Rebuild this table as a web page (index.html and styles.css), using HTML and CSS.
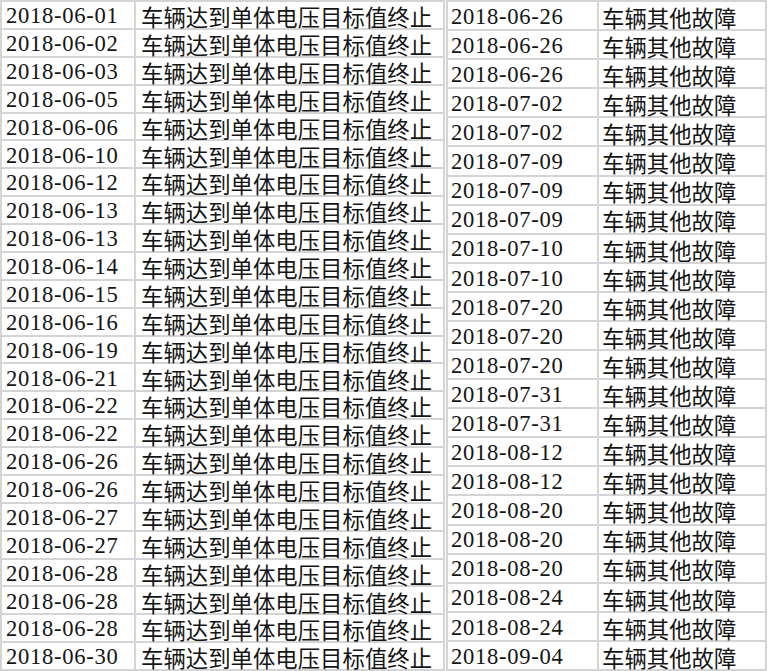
FILE: index.html
```html
<!DOCTYPE html>
<html lang="zh">
<head>
<meta charset="utf-8">
<link rel="stylesheet" href="styles.css">
</head>
<body>
<div class="sheet">
  <div class="grid grid-left">
    <div class="c d">2018-06-01</div><div class="c t">车辆达到单体电压目标值终止</div>
    <div class="c d">2018-06-02</div><div class="c t">车辆达到单体电压目标值终止</div>
    <div class="c d">2018-06-03</div><div class="c t">车辆达到单体电压目标值终止</div>
    <div class="c d">2018-06-05</div><div class="c t">车辆达到单体电压目标值终止</div>
    <div class="c d">2018-06-06</div><div class="c t">车辆达到单体电压目标值终止</div>
    <div class="c d">2018-06-10</div><div class="c t">车辆达到单体电压目标值终止</div>
    <div class="c d">2018-06-12</div><div class="c t">车辆达到单体电压目标值终止</div>
    <div class="c d">2018-06-13</div><div class="c t">车辆达到单体电压目标值终止</div>
    <div class="c d">2018-06-13</div><div class="c t">车辆达到单体电压目标值终止</div>
    <div class="c d">2018-06-14</div><div class="c t">车辆达到单体电压目标值终止</div>
    <div class="c d">2018-06-15</div><div class="c t">车辆达到单体电压目标值终止</div>
    <div class="c d">2018-06-16</div><div class="c t">车辆达到单体电压目标值终止</div>
    <div class="c d">2018-06-19</div><div class="c t">车辆达到单体电压目标值终止</div>
    <div class="c d">2018-06-21</div><div class="c t">车辆达到单体电压目标值终止</div>
    <div class="c d">2018-06-22</div><div class="c t">车辆达到单体电压目标值终止</div>
    <div class="c d">2018-06-22</div><div class="c t">车辆达到单体电压目标值终止</div>
    <div class="c d">2018-06-26</div><div class="c t">车辆达到单体电压目标值终止</div>
    <div class="c d">2018-06-26</div><div class="c t">车辆达到单体电压目标值终止</div>
    <div class="c d">2018-06-27</div><div class="c t">车辆达到单体电压目标值终止</div>
    <div class="c d">2018-06-27</div><div class="c t">车辆达到单体电压目标值终止</div>
    <div class="c d">2018-06-28</div><div class="c t">车辆达到单体电压目标值终止</div>
    <div class="c d">2018-06-28</div><div class="c t">车辆达到单体电压目标值终止</div>
    <div class="c d">2018-06-28</div><div class="c t">车辆达到单体电压目标值终止</div>
    <div class="c d">2018-06-30</div><div class="c t">车辆达到单体电压目标值终止</div>
  </div>
  <div class="grid grid-right">
    <div class="c d">2018-06-26</div><div class="c t">车辆其他故障</div>
    <div class="c d">2018-06-26</div><div class="c t">车辆其他故障</div>
    <div class="c d">2018-06-26</div><div class="c t">车辆其他故障</div>
    <div class="c d">2018-07-02</div><div class="c t">车辆其他故障</div>
    <div class="c d">2018-07-02</div><div class="c t">车辆其他故障</div>
    <div class="c d">2018-07-09</div><div class="c t">车辆其他故障</div>
    <div class="c d">2018-07-09</div><div class="c t">车辆其他故障</div>
    <div class="c d">2018-07-09</div><div class="c t">车辆其他故障</div>
    <div class="c d">2018-07-10</div><div class="c t">车辆其他故障</div>
    <div class="c d">2018-07-10</div><div class="c t">车辆其他故障</div>
    <div class="c d">2018-07-20</div><div class="c t">车辆其他故障</div>
    <div class="c d">2018-07-20</div><div class="c t">车辆其他故障</div>
    <div class="c d">2018-07-20</div><div class="c t">车辆其他故障</div>
    <div class="c d">2018-07-31</div><div class="c t">车辆其他故障</div>
    <div class="c d">2018-07-31</div><div class="c t">车辆其他故障</div>
    <div class="c d">2018-08-12</div><div class="c t">车辆其他故障</div>
    <div class="c d">2018-08-12</div><div class="c t">车辆其他故障</div>
    <div class="c d">2018-08-20</div><div class="c t">车辆其他故障</div>
    <div class="c d">2018-08-20</div><div class="c t">车辆其他故障</div>
    <div class="c d">2018-08-20</div><div class="c t">车辆其他故障</div>
    <div class="c d">2018-08-24</div><div class="c t">车辆其他故障</div>
    <div class="c d">2018-08-24</div><div class="c t">车辆其他故障</div>
    <div class="c d">2018-09-04</div><div class="c t">车辆其他故障</div>
  </div>
</div>
</body>
</html>
```
FILE: styles.css
```css
html, body {
  margin: 0;
  padding: 0;
  background: #ffffff;
}
.sheet {
  display: flex;
  gap: 1px;
  width: 770px;
  height: 671px;
  overflow: hidden;
}
.grid {
  display: grid;
  gap: 2px;
  padding: 2px;
  background: #d4d4d4;
  box-sizing: border-box;
  align-self: flex-start;
}
.grid-left {
  width: 445px;
  grid-template-columns: 132px 307px;
  grid-template-rows: repeat(24, 1fr);
  height: 671px;
}
.grid-right {
  width: 321px;
  grid-template-columns: 149px 166px;
  grid-template-rows: repeat(23, 1fr);
  height: 671px;
}
.c {
  background: #ffffff;
  color: #141414;
  display: flex;
  align-items: center;
  padding-top: 3px;
  box-sizing: border-box;
  white-space: nowrap;
  line-height: 1;
}
.d {
  font-family: "Liberation Serif", "Noto Sans CJK SC", serif;
  font-size: 22.6px;
  letter-spacing: 0.7px;
  padding-left: 4px;
}
.t {
  font-family: "Noto Sans CJK SC", sans-serif;
  font-size: 22.4px;
  padding-left: 5px;
}
.grid-right .d {
  padding-left: 3px;
}
.grid-right .t {
  padding-left: 3px;
}
```
